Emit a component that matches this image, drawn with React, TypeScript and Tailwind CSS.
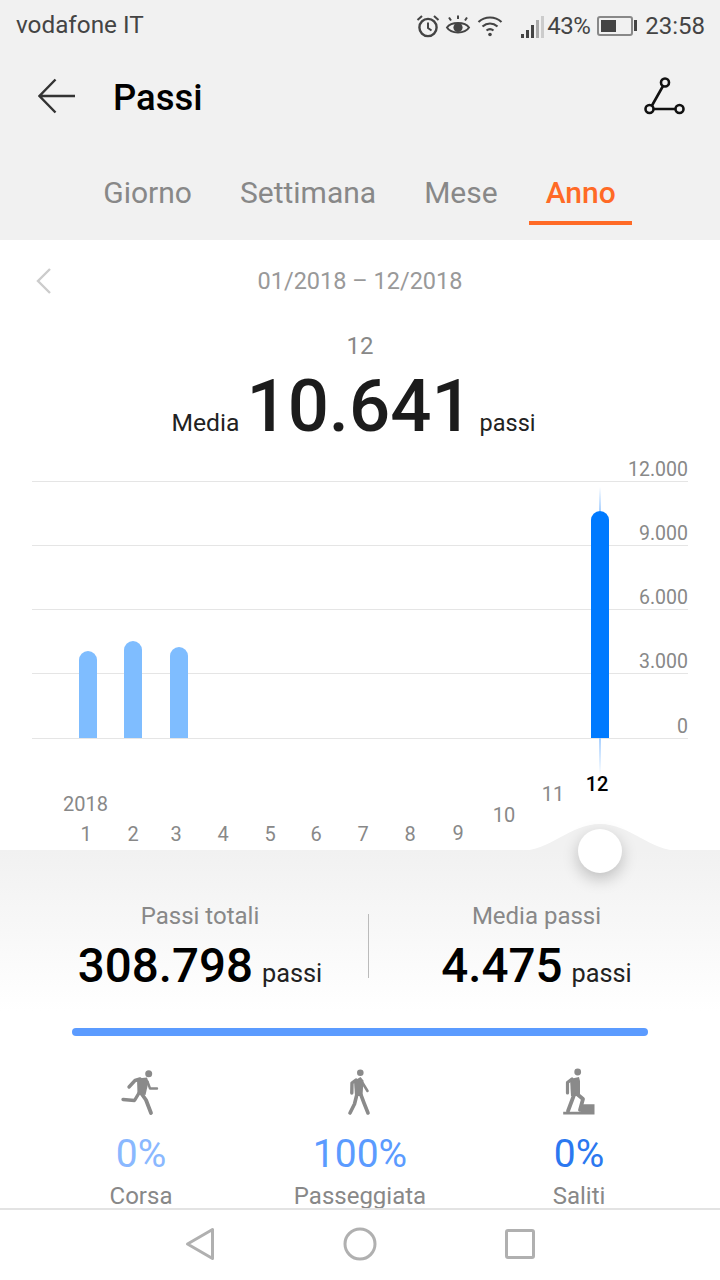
const tabs = ["Giorno", "Settimana", "Mese"];
const ticks = ["9.000", "6.000", "3.000"];
const bars = [
  { left: "left-[79px]", top: "h-[87px]" },
  { left: "left-[124px]", top: "h-[97px]" },
  { left: "left-[170px]", top: "h-[91px]" },
];
const months = [
  { label: "1", cls: "left-[66px] top-[84px] w-10" },
  { label: "2", cls: "left-[113px] top-[84px] w-10" },
  { label: "3", cls: "left-[156px] top-[84px] w-10" },
  { label: "4", cls: "left-[203px] top-[84px] w-10" },
  { label: "5", cls: "left-[250px] top-[84px] w-10" },
  { label: "6", cls: "left-[296px] top-[84px] w-10" },
  { label: "7", cls: "left-[343px] top-[84px] w-10" },
  { label: "8", cls: "left-[390px] top-[84px] w-10" },
  { label: "9", cls: "left-[438px] top-[83px] w-10" },
  { label: "10", cls: "left-[484px] top-[65px] w-10" },
  { label: "11", cls: "left-[533px] top-[44px] w-10" },
];

function StatusIcons() {
  return (
    <div className="flex items-center text-[#444]">
      <svg width="24" height="24" viewBox="0 0 24 24" fill="none" stroke="#444" strokeWidth="2.4" className="mr-[5px]">
        <circle cx="12" cy="13.5" r="8.6" />
        <path d="M12 8.5v5.500l3.500 2.500" strokeWidth="2" />
        <path d="M1.500 6 6 2M22.500 6 18 2" strokeWidth="2" />
      </svg>
      <svg width="26" height="24" viewBox="0 0 26 24" fill="none" stroke="#444" strokeWidth="2" className="mr-[6px]">
        <path d="M2 13.500C6 7.500 20 7.500 24 13.500 20 20 6 20 2 13.500Z" />
        <circle cx="13" cy="13.500" r="4.600" fill="#444" stroke="none" />
        <path d="M6 6.500 4 3.500M13 5V1.500M20 6.500l2-3" />
      </svg>
      <svg width="26" height="24" viewBox="0 0 26 24" fill="none" stroke="#444" strokeWidth="2.2" className="mr-[18px]">
        <path d="M1.500 8C8 2 18 2 24.500 8" />
        <path d="M5.500 12.500c4.500-4 10.500-4 15 0" />
        <path d="M9.500 16.500c2.200-1.800 4.800-1.800 7 0" />
        <circle cx="13" cy="20.500" r="1.800" fill="#444" stroke="none" />
      </svg>
      <div className="flex items-end gap-[2px] h-6 mr-[3px]">
        <div className="w-[3px] h-[4px] bg-[#444]" />
        <div className="w-[3px] h-[8px] bg-[#444]" />
        <div className="w-[3px] h-[13px] bg-[#444]" />
        <div className="w-[3px] h-[18px] bg-[#aaa]" />
        <div className="w-[3px] h-[22px] bg-[#ccc]" />
      </div>
      <span className="text-[24px] tracking-[-0.5px] mr-[7px]">43%</span>
      <div className="w-[36px] h-[20px] rounded-[3px] border-2 border-[#888] p-[2px] mr-[1px]">
        <div className="w-[15px] h-full bg-[#444]" />
      </div>
      <div className="w-[3px] h-[11px] bg-[#444] mr-[8px]" />
      <span className="text-[24px]">23:58</span>
    </div>
  );
}

function RunIcon() {
  return (
    <svg width="60" height="60" viewBox="1 0 60 60" fill="none" stroke="#8a8a8a" strokeWidth="3.8" strokeLinecap="round" strokeLinejoin="round">
      <circle cx="38.700" cy="11.700" r="3.500" fill="#8a8a8a" stroke="none" />
      <path d="M27 16.500 37 15.500 38.500 20 35.500 33 27.500 32Z" fill="#8a8a8a" stroke="none" />
      <path d="M30 17 25 18.500 19 25" strokeWidth="3.400" />
      <path d="M37.500 19.500l2.500 7H47" strokeWidth="2.400" />
      <path d="M29 31l-4.500 7.500L13 37.500" strokeWidth="3.400" />
      <path d="M31 31l5 7 5 13" />
    </svg>
  );
}

function WalkIcon() {
  return (
    <svg width="50" height="60" viewBox="0 0 50 60" fill="none" stroke="#8a8a8a" strokeWidth="3.600" strokeLinecap="round" strokeLinejoin="round">
      <circle cx="25.300" cy="10.800" r="3.300" fill="#8a8a8a" stroke="none" />
      <path d="M19 19 25.500 15 28.500 18.500 27.500 34 20 34Z" fill="#8a8a8a" stroke="none" />
      <path d="M21 18 17 21 16.800 31" strokeWidth="3.400" />
      <path d="M27 20l5.500 9" strokeWidth="2.600" />
      <path d="M21.500 34 19.500 42 15 51" />
      <path d="M26 33 29 41 33 51" />
    </svg>
  );
}

function ClimbIcon() {
  return (
    <svg width="60" height="60" viewBox="-1 0 60 60" fill="none" stroke="#8a8a8a" strokeWidth="3.800" strokeLinecap="round" strokeLinejoin="round">
      <circle cx="27.700" cy="10" r="3.400" fill="#8a8a8a" stroke="none" />
      <path d="M20 17 29 15 30 19 30 34 21 34Z" fill="#8a8a8a" stroke="none" />
      <path d="M22 17 17.500 20.500 17.500 31" strokeWidth="3.200" />
      <path d="M27 32l6 5-3 11" />
      <path d="M24 33l-6 16" />
      <path d="M13.200 52.500V49.700H31V42.300H44.500V52.500Z" fill="#8a8a8a" stroke="none" />
    </svg>
  );
}

function Mode({ icon, value, label, color }: { icon: React.ReactNode; value: string; label: string; color: string }) {
  return (
    <div className="w-[218px] flex flex-col items-center">
      <div className="h-[60px] flex items-center">{icon}</div>
      <span className={`text-[39px] leading-[48px] mt-[8px] ${color}`}>{value}</span>
      <span className="text-[24px] leading-9 text-[#888] whitespace-nowrap">{label}</span>
    </div>
  );
}

export default function App() {
  return (
    <div className="w-[720px] h-[1280px] flex flex-col overflow-hidden bg-white font-['Roboto',sans-serif]">
      {/* Status bar */}
      <div className="h-12 shrink-0 pt-[3px] pl-4 pr-[15px] flex items-center justify-between bg-[#f1f1f1]">
        <span className="text-[24.300px] text-[#444]">vodafone IT</span>
        <StatusIcons />
      </div>

      {/* Header */}
      <div className="h-24 shrink-0 pl-[38px] pr-[34px] flex items-center justify-between bg-[#f1f1f1]">
        <div className="flex items-center">
          <svg width="38" height="36" viewBox="0 0 38 36" fill="none" stroke="#333" strokeWidth="2.4" className="mr-[37px]">
            <path d="M37 18H2M17.500 1.500 1.500 18l16 16.500" />
          </svg>
          <span className="text-[36.500px] font-medium text-black pt-[4px]">Passi</span>
        </div>
        <svg width="42" height="40" viewBox="0 0 42 40" fill="none" stroke="#111" strokeWidth="2.600">
          <circle cx="21" cy="6.500" r="4" />
          <circle cx="5.500" cy="33" r="4" />
          <circle cx="35.500" cy="33" r="4" />
          <path d="M19 10 8 29.500M9.500 33H31.500" />
        </svg>
      </div>

      {/* Tabs */}
      <div className="h-24 shrink-0 flex justify-center gap-[48px] pr-[1px] bg-[#f1f1f1]">
        {tabs.map((t) => (
          <span key={t} className="text-[30px] text-[#888] pt-[26px]">
            {t}
          </span>
        ))}
        <div className="relative text-[30px] font-medium text-[#ff6a26] pt-[26px]">
          Anno
          <div className="absolute -left-[17px] -right-[16px] top-[77px] h-[4px] bg-[#ff6a26]" />
        </div>
      </div>

      {/* Date range */}
      <div className="relative h-[82px] shrink-0 pt-[2px] flex items-center justify-center text-[23.500px] text-[#999]">
        <svg width="18" height="28" viewBox="0 0 18 28" fill="none" stroke="#ccc" strokeWidth="2.400" className="absolute left-[35px] top-[27px]">
          <path d="M15 2 3 14l12 12" />
        </svg>
        01/2018 – 12/2018
      </div>

      {/* Summary */}
      <div className="h-[127px] shrink-0 flex flex-col items-center">
        <span className="text-[24px] leading-[48px] text-[#888]">12</span>
        <div className="flex items-baseline gap-[7px] h-[72px] pr-[13px] pt-[1px]">
          <span className="text-[24.700px] text-[#222]">Media</span>
          <span className="text-[72.500px] leading-[72px] font-medium text-[#1c1c1c]">10.641</span>
          <span className="text-[23.500px] text-[#222]">passi</span>
        </div>
      </div>

      {/* Chart */}
      <div className="relative ml-8 mr-8 shrink-0 h-[289px] text-[19.500px] text-[#888] text-right leading-6">
        <div className="h-[33px] border-b border-[#e5e5e5] pt-[9px]">12.000</div>
        {ticks.map((t) => (
          <div key={t} className="h-[64px] border-b border-[#e5e5e5] pt-[40px]">
            {t}
          </div>
        ))}
        <div className="h-[65px] border-b border-[#e5e5e5] pt-[41px]">0</div>

        {/* Bars */}
        <div className="absolute left-[-32px] top-[32px] w-[720px] h-[257px]">
          {bars.map((b) => (
            <div
              key={b.left}
              className={`absolute bottom-0 w-[18px] rounded-t-full bg-[#7fbdff] ${b.left} ${b.top}`}
            />
          ))}
          <div className="absolute left-[591px] bottom-0 w-[18px] h-[227px] rounded-t-full bg-[#007aff]" />
          <div className="absolute left-[599px] top-[6px] w-[2px] h-[24px] bg-gradient-to-t from-[#a8d0ff] to-white" />
        </div>
      </div>

      {/* Month wheel */}
      <div className="relative h-[112px] shrink-0 text-[20px] text-[#888] leading-6 text-center">
        <div className="absolute left-[599px] top-0 w-[2px] h-[37px] bg-gradient-to-b from-[#a8d0ff] to-white" />
        <span className="absolute left-[63px] top-[54px]">2018</span>
        {months.map((m) => (
          <span key={m.label} className={`absolute ${m.cls}`}>
            {m.label}
          </span>
        ))}
        <span className="absolute left-[577px] top-[34px] w-10 font-medium text-black">12</span>
      </div>

      {/* Stats */}
      <div className="relative flex-1 min-h-0 bg-gradient-to-b from-[#f1f1f1] to-white to-[45%]">
        <svg width="160" height="28" viewBox="0 0 160 28" className="absolute left-[520px] -top-[27px]" fill="#f1f1f1">
          <path d="M0 28C30 28 50 1 80 1s50 27 80 27Z" />
        </svg>
        <div className="absolute left-[578px] -top-[21px] w-11 h-11 rounded-full bg-white shadow-[0_6px_16px_rgba(0,0,0,0.22)]" />

        <div className="flex pt-[48px] pl-[32px]">
          <div className="w-[336px] flex flex-col items-center">
            <span className="text-[24px] leading-9 text-[#888]">Passi totali</span>
            <div className="flex items-baseline gap-[9px] mt-[2px]">
              <span className="text-[47.500px] leading-[60px] font-medium text-black">308.798</span>
              <span className="text-[25.300px] text-[#222]">passi</span>
            </div>
          </div>
          <div className="w-px h-[64px] mt-[16px] bg-[#bbb]" />
          <div className="w-[335px] flex flex-col items-center">
            <span className="text-[24px] leading-9 text-[#888]">Media passi</span>
            <div className="flex items-baseline gap-[9px] mt-[2px]">
              <span className="text-[47.500px] leading-[60px] font-medium text-black">4.475</span>
              <span className="text-[25.300px] text-[#222]">passi</span>
            </div>
          </div>
        </div>

        <div className="h-2 mx-[72px] mt-[32px] rounded-full bg-[#5b9bff]" />

        <div className="flex justify-between mt-[26px] px-[32px]">
          <Mode icon={<RunIcon />} value="0%" label="Corsa" color="text-[#8ab8ff]" />
          <Mode icon={<WalkIcon />} value="100%" label="Passeggiata" color="text-[#5b9bff]" />
          <Mode icon={<ClimbIcon />} value="0%" label="Saliti" color="text-[#2b78f0]" />
        </div>
      </div>

      {/* Nav bar */}
      <div className="relative z-10 h-[72px] shrink-0 pb-[2px] border-t-2 border-[#e3e3e3] bg-white flex items-center justify-center gap-[128px]">
        <svg width="30" height="34" viewBox="0 0 30 34" fill="none" stroke="#b0b0b0" strokeWidth="3" strokeLinejoin="round">
          <path d="M27.500 2.500v29L2.500 17Z" />
        </svg>
        <svg width="34" height="34" viewBox="0 0 34 34" fill="none" stroke="#b0b0b0" strokeWidth="3">
          <circle cx="17" cy="17" r="15" />
        </svg>
        <svg width="30" height="30" viewBox="0 0 30 30" fill="none" stroke="#b0b0b0" strokeWidth="3">
          <rect x="1.500" y="1.500" width="27" height="27" rx="1.500" />
        </svg>
      </div>
    </div>
  );
}
